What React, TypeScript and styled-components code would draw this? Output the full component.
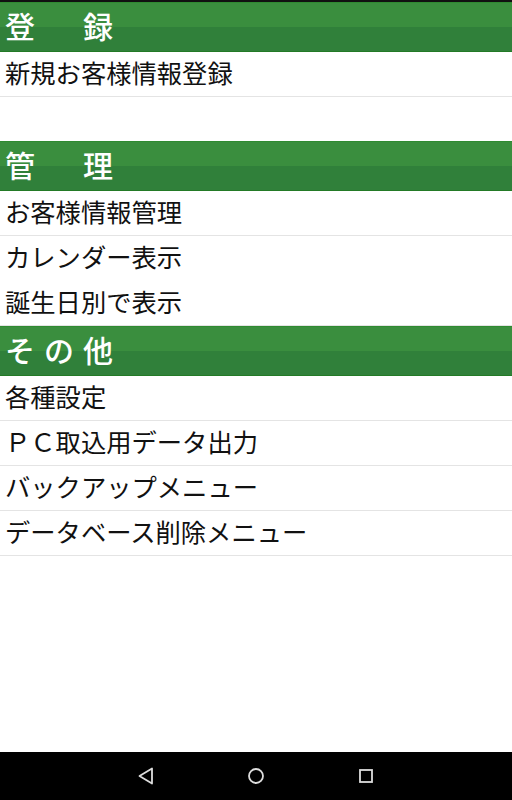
import React from "react";
import styled, { createGlobalStyle } from "styled-components";

const Global = createGlobalStyle`
  html, body { margin: 0; padding: 0; background: #ffffff; }
  body { font-family: "Noto Sans CJK JP", "Noto Sans", sans-serif; }
  * { box-sizing: border-box; }
`;

const Screen = styled.div`
  height: 100vh;
  display: flex;
  flex-direction: column;
  background: #ffffff;
`;

const TopEdge = styled.div`
  height: 2px;
  background: #111111;
  flex: none;
`;

const Content = styled.div`
  flex: 1;
  display: flex;
  flex-direction: column;
`;

const SectionHeader = styled.div`
  height: 50px;
  flex: none;
  display: flex;
  align-items: center;
  padding: 0 0 4px 5px;
  background: linear-gradient(
    to bottom,
    #3a8e3e 0,
    #3a8e3e 50%,
    #30803a 50%,
    #30803a 100%
  );
  border-top: 1px solid #2f8a31;
  border-bottom: 1px solid #237a26;
  color: #ffffff;
  font-size: 30px;
  font-weight: 500;
  letter-spacing: 9px;
  line-height: 1;
  white-space: pre;
`;

const Item = styled.div<{ $divider?: boolean }>`
  height: 45px;
  flex: none;
  display: flex;
  align-items: center;
  padding: 0 0 3px 5px;
  border-bottom: 1px solid ${(p) => (p.$divider === false ? "transparent" : "#e4e4e4")};
  color: #111111;
  font-size: 25.3px;
  line-height: 1;
  white-space: nowrap;
`;

const Spacer = styled.div`
  height: 44px;
  flex: none;
`;

const NavBar = styled.div`
  height: 48px;
  flex: none;
  background: #000000;
  display: flex;
  align-items: center;
  justify-content: center;
  gap: 86px;
`;

const NavButton = styled.div`
  width: 24px;
  height: 24px;
  display: flex;
  align-items: center;
  justify-content: center;
`;

export default function App() {
  return (
    <Screen>
      <Global />
      <TopEdge />
      <Content>
        <SectionHeader>登　録</SectionHeader>
        <Item>新規お客様情報登録</Item>
        <Spacer />
        <SectionHeader>管　理</SectionHeader>
        <Item>お客様情報管理</Item>
        <Item $divider={false}>カレンダー表示</Item>
        <Item>誕生日別で表示</Item>
        <SectionHeader>その他</SectionHeader>
        <Item>各種設定</Item>
        <Item>ＰＣ取込用データ出力</Item>
        <Item>バックアップメニュー</Item>
        <Item>データベース削除メニュー</Item>
      </Content>
      <NavBar>
        <NavButton>
          <svg width="24" height="24" viewBox="0 0 24 24">
            <path d="M18 4.5 L18 19.5 L5.5 12 Z" fill="none" stroke="#dddddd" strokeWidth="1.8" strokeLinejoin="round" />
          </svg>
        </NavButton>
        <NavButton>
          <svg width="24" height="24" viewBox="0 0 24 24">
            <circle cx="12" cy="12" r="7" fill="none" stroke="#dddddd" strokeWidth="1.8" />
          </svg>
        </NavButton>
        <NavButton>
          <svg width="24" height="24" viewBox="0 0 24 24">
            <rect x="6" y="6" width="12" height="12" fill="none" stroke="#dddddd" strokeWidth="1.8" />
          </svg>
        </NavButton>
      </NavBar>
    </Screen>
  );
}
